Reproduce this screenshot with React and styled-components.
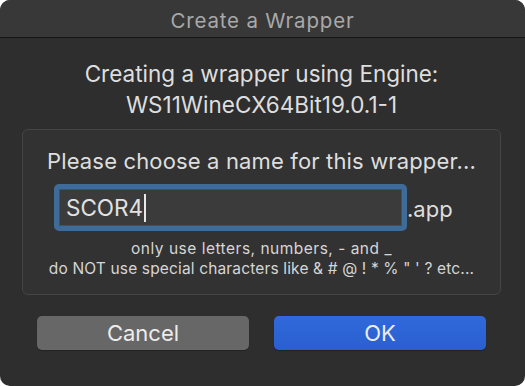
import React from "react";
import styled, { createGlobalStyle } from "styled-components";

const Global = createGlobalStyle`
  html, body { margin: 0; padding: 0; background: #ffffff; }
  body { font-family: Inter, "Liberation Sans", sans-serif; }
`;

const Window = styled.div`
  width: 525px;
  height: 386px;
  border-radius: 10px;
  overflow: hidden;
  background: #2e2e2e;
  display: flex;
  flex-direction: column;
`;

const TitleBar = styled.div`
  flex: none;
  box-sizing: content-box;
  background: #383838;
  border-bottom: 1px solid #141414;
  display: flex;
  align-items: center;
  justify-content: center;
  padding-top: 3px;
  height: 34px;
  color: #a9a9a9;
  font-size: 20.5px;
  letter-spacing: 0.8px;
`;

const Body = styled.div`
  display: flex;
  flex-direction: column;
  align-items: stretch;
  padding: 20px 24px 0 22px;
`;

const Heading = styled.div`
  text-align: center;
  color: #dedede;
  font-size: 22.5px;
  line-height: 31px;
`;

const Group = styled.div`
  margin-top: 9px;
  border: 1px solid #454545;
  border-radius: 6px;
  background: #323232;
  display: flex;
  flex-direction: column;
  align-items: center;
  padding: 18px 0 15px;
`;

const Prompt = styled.div`
  color: #dedede;
  font-size: 22px;
  line-height: 26px;
  letter-spacing: 0.15px;
`;

const FieldRow = styled.div`
  margin-top: 10px;
  display: flex;
  align-items: center;
  align-self: flex-start;
  margin-left: 31px;
`;

const Field = styled.div`
  width: 353px;
  height: 47px;
  box-sizing: border-box;
  border: 5px solid #3f6b99;
  border-radius: 5px;
  box-shadow: inset 0 0 0 1px #30557c;
  background: #3b3b3b;
  display: flex;
  align-items: center;
  padding-left: 7px;
  color: #e2e2e2;
  font-size: 22.5px;
`;

const Caret = styled.span`
  display: inline-block;
  width: 1.5px;
  height: 28px;
  background: #e8e8e8;
  margin-left: 1px;
`;

const Suffix = styled.div`
  color: #dedede;
  font-size: 22px;
  padding-top: 2px;
`;

const Hint = styled.div`
  color: #d6d6d6;
  font-size: 15.5px;
  line-height: 20px;
  text-align: center;
  letter-spacing: ${(p) => p.$spacing || 0}px;
  margin-top: ${(p) => p.$top || 0}px;
`;

const Buttons = styled.div`
  display: flex;
  gap: 25px;
  padding: 21px 15px 0 15px;
`;

const Button = styled.div`
  width: 212px;
  height: 34px;
  flex: none;
  border-radius: 5px;
  display: flex;
  align-items: center;
  justify-content: center;
  font-size: 22px;
  color: #ececec;
  background: ${(p) =>
    p.$primary ? "linear-gradient(#3069dc, #2a5fcf)" : "#676767"};
  box-shadow: 0 1px 1px rgba(0, 0, 0, 0.25);
`;

export default function App() {
  return (
    <>
      <Global />
      <Window>
        <TitleBar>Create a Wrapper</TitleBar>
        <Body>
          <Heading>
            Creating a wrapper using Engine:
            <br />
            WS11WineCX64Bit19.0.1-1
          </Heading>
          <Group>
            <Prompt>Please choose a name for this wrapper...</Prompt>
            <FieldRow>
              <Field>
                SCOR4
                <Caret />
              </Field>
              <Suffix>.app</Suffix>
            </FieldRow>
            <Hint $top={8} $spacing={0.5}>only use letters, numbers, - and _</Hint>
            <Hint $spacing={0.15}>do NOT use special characters like &amp; # @ ! * % " ' ? etc...</Hint>
          </Group>
          <Buttons>
            <Button>Cancel</Button>
            <Button $primary>OK</Button>
          </Buttons>
        </Body>
      </Window>
    </>
  );
}
